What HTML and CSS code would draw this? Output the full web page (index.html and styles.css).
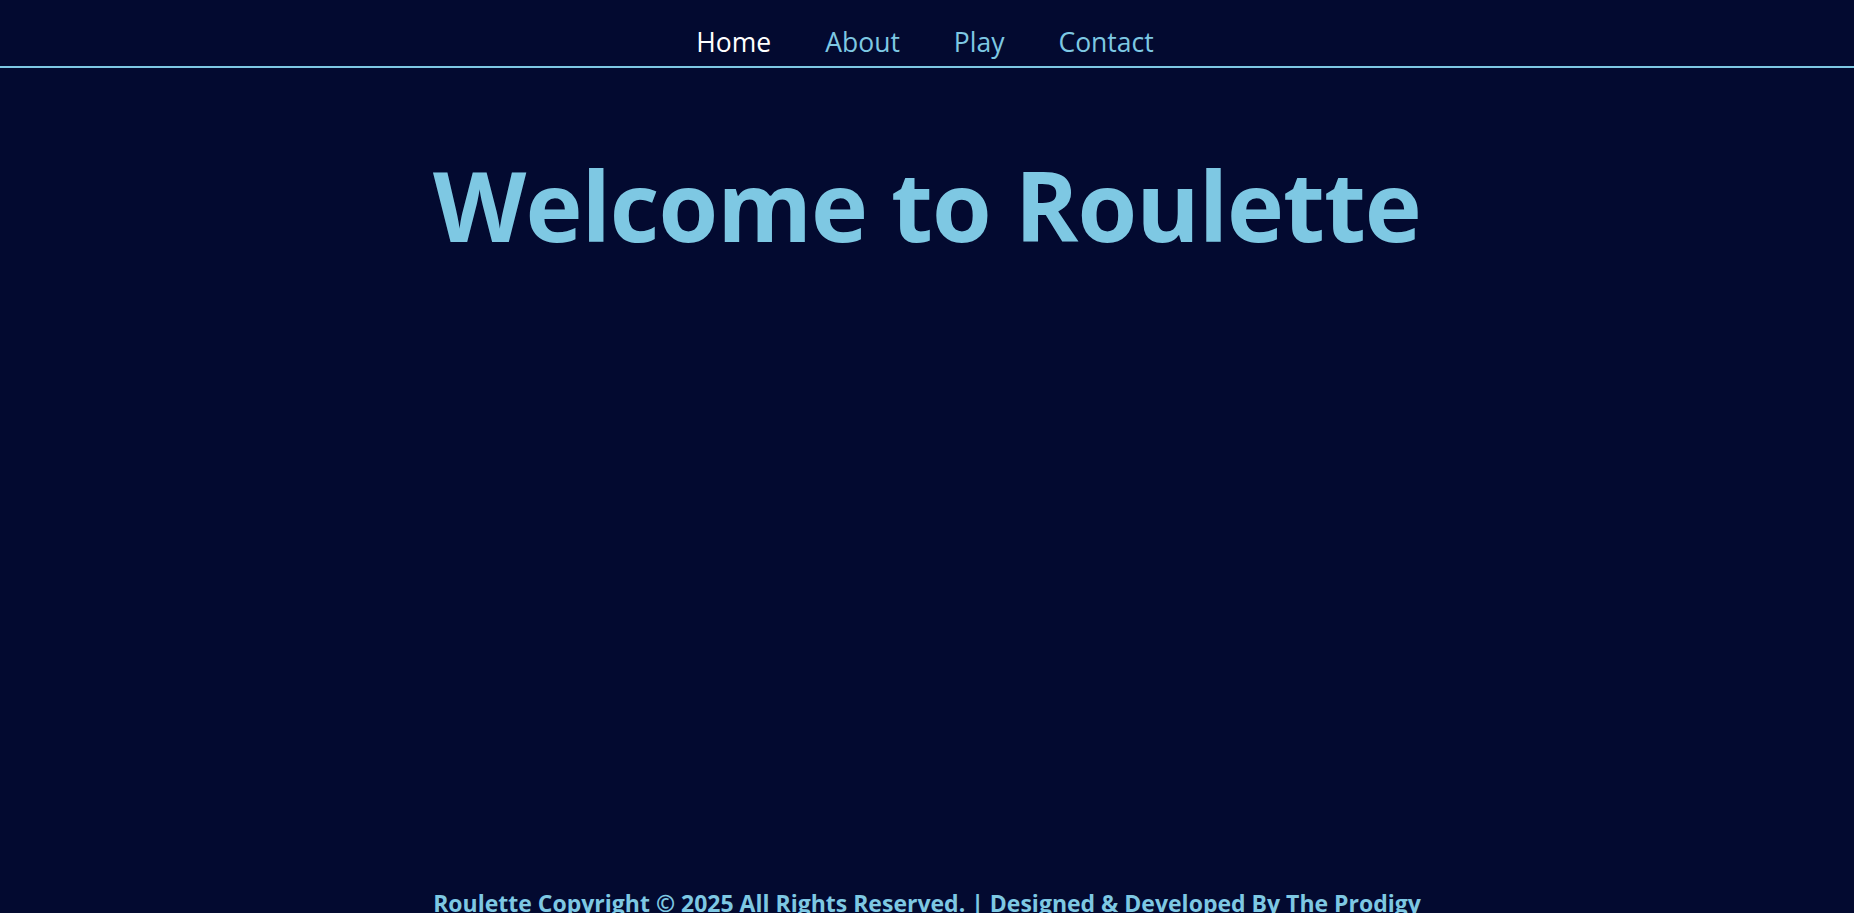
FILE: index.html
```html
<!DOCTYPE html>
<html lang="en">
<head>
<meta charset="utf-8">
<title>Roulette</title>
<link rel="stylesheet" href="styles.css">
</head>
<body>
<header class="site-header">
  <nav class="nav">
    <a class="nav-link active" href="#">Home</a>
    <a class="nav-link" href="#">About</a>
    <a class="nav-link" href="#">Play</a>
    <a class="nav-link" href="#">Contact</a>
  </nav>
</header>
<main class="main">
  <h1 class="title">Welcome to Roulette</h1>
</main>
<footer class="footer">
  <p class="footer-text">Roulette Copyright © 2025 All Rights Reserved. | Designed &amp; Developed By The Prodigy</p>
</footer>
</body>
</html>
```

FILE: styles.css
```css
html, body {
  margin: 0;
  padding: 0;
}
body {
  background: #030a30;
  color: #7ec8e3;
  font-family: "Open Sans", "Noto Sans", sans-serif;
  min-height: 100vh;
  display: flex;
  flex-direction: column;
}
.site-header {
  border-bottom: 2px solid #7ec8e3;
}
.nav {
  display: flex;
  justify-content: center;
  gap: 54px;
  padding: 22px 4px 4px 0;
}
.nav-link {
  color: #7ec8e3;
  text-decoration: none;
  font-size: 26.5px;
  line-height: 40px;
}
.nav-link.active {
  color: #ffffff;
}
.main {
  flex: 1;
  display: flex;
  flex-direction: column;
  align-items: center;
}
.title {
  margin: 72px 0 0;
  font-size: 96.5px;
  font-weight: 700;
  line-height: 130px;
  letter-spacing: -1px;
}
.footer {
  display: flex;
  justify-content: center;
  height: 0;
}
.footer-text {
  margin: 0;
  font-size: 23px;
  font-weight: 700;
  transform: translateY(-26px);
}
```
